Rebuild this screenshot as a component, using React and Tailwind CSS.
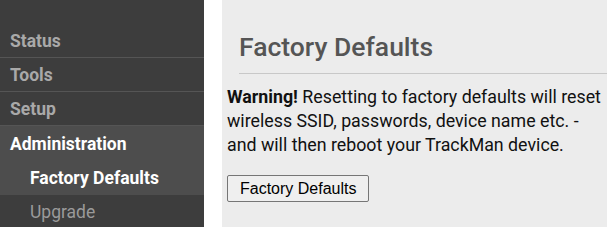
export default function App() {
  const items = [
    { label: "Status" },
    { label: "Tools" },
    { label: "Setup" },
  ];

  return (
    <div className="flex h-[227px] w-[607px] overflow-hidden bg-white font-['Roboto',sans-serif]">
      {/* sidebar */}
      <aside className="flex w-[204px] shrink-0 flex-col bg-[#3d3d3d] pt-[24px]">
        {items.map((item) => (
          <div
            key={item.label}
            className="flex h-[35px] items-center border-b border-[#555] px-[10px] pt-[2px] text-[17.5px] font-bold text-[#a9a9a9]"
          >
            {item.label}
          </div>
        ))}
        <div className="bg-[#4d4d4d]">
          <div className="flex h-[34px] items-center px-[10px] pt-[2px] text-[17.5px] font-bold text-white">
            Administration
          </div>
          <div className="flex h-[35px] items-center pl-[30px] pt-[2px] text-[17.5px] font-bold text-white">
            Factory Defaults
          </div>
        </div>
        <div className="flex h-[33px] items-center pl-[30px] pt-[2px] text-[17.5px] text-[#9a9a9a]">
          Upgrade
        </div>
      </aside>

      <div className="w-[18px] shrink-0 bg-white" />

      {/* content */}
      <main className="flex-1 bg-[#ececec] pl-[5px] pt-[29px]">
        <h1 className="ml-[12px] border-b border-[#c8c8c8] pb-[8px] text-[26.5px] font-medium leading-[36px] text-[#555]">
          Factory Defaults
        </h1>
        <p className="mt-[11px] text-[17.8px] leading-[24px] text-[#111]">
          <b>Warning!</b> Resetting to factory defaults will reset wireless
          SSID, passwords, device name etc. - and will then reboot your
          TrackMan device.
        </p>
        <button className="mt-[18px] h-[27px] rounded-[2px] border border-[#767676] bg-[#efefef] px-[12px] font-['Liberation_Sans',sans-serif] text-[16px] text-black">
          Factory Defaults
        </button>
      </main>
    </div>
  );
}
